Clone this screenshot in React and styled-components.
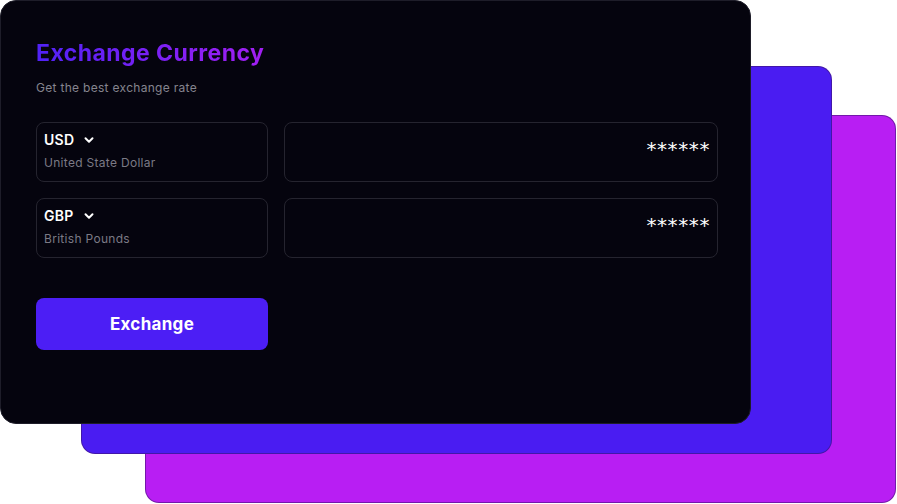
import React from 'react'
import styled, { createGlobalStyle } from 'styled-components';

const GlobalStyle = createGlobalStyle`
  html, body {
    margin: 0;
    padding: 0;
    background: #ffffff;
    font-family: Inter, "Noto Sans", sans-serif;
  }
`;

const currencies = [
  { code: 'USD', name: 'United State Dollar', amount: '******' },
  { code: 'GBP', name: 'British Pounds', amount: '******' },
];

const Chevron = () => (
  <svg width="14" height="14" viewBox="0 0 24 24" fill="none" stroke="currentColor" strokeWidth="3.4" strokeLinecap="round" strokeLinejoin="round">
    <polyline points="6 9 12 15 18 9" />
  </svg>
);

const App = () => {
  return (
    <>
      <GlobalStyle />
      <Stage>
        <BackCard $x={145} $y={115} $color="#b81ef3" />
        <BackCard $x={81} $y={66} $color="#4a1cf2" />
        <MainCard>
          <Title>Exchange Currency</Title>
          <Subtitle>Get the best exchange rate</Subtitle>
          <Rows>
            {currencies.map((c) => (
              <Row key={c.code}>
                <Select>
                  <Code>
                    {c.code}
                    <Chevron />
                  </Code>
                  <CurrencyName>{c.name}</CurrencyName>
                </Select>
                <Amount>{c.amount}</Amount>
              </Row>
            ))}
          </Rows>
          <Button>Exchange</Button>
        </MainCard>
      </Stage>
    </>
  )
}

export default App

const Stage = styled.div`
  display: grid;
  width: 897px;
  height: 504px;
`;

const BackCard = styled.div`
  grid-area: 1 / 1;
  margin: ${(p) => p.$y}px 0 0 ${(p) => p.$x}px;
  width: 751px;
  height: 388px;
  box-sizing: border-box;
  border-radius: 14px;
  background: ${(p) => p.$color};
  border: 1px solid rgba(60, 20, 110, 0.55);
`;

const MainCard = styled.div`
  grid-area: 1 / 1;
  width: 751px;
  height: 424px;
  box-sizing: border-box;
  border-radius: 16px;
  background: #05040e;
  border: 1px solid #1e1d29;
  padding: 38px 34px 0 35px;
  display: flex;
  flex-direction: column;
`;

const Title = styled.h1`
  margin: 0;
  font-size: 23px;
  line-height: 28px;
  font-weight: 700;
  letter-spacing: 0.45px;
  background: linear-gradient(90deg, #5022f6 0%, #a21ff2 100%);
  -webkit-background-clip: text;
  background-clip: text;
  color: transparent;
  align-self: flex-start;
`;

const Subtitle = styled.p`
  margin: 13px 0 0;
  font-size: 12px;
  line-height: 16px;
  letter-spacing: 0.3px;
  color: #85848f;
`;

const Rows = styled.div`
  margin-top: 26px;
  display: flex;
  flex-direction: column;
  gap: 16px;
`;

const Row = styled.div`
  display: grid;
  grid-template-columns: 232px 434px;
  gap: 16px;
`;

const Field = styled.div`
  box-sizing: border-box;
  height: 60px;
  border: 1px solid #25242f;
  border-radius: 8px;
`;

const Select = styled(Field)`
  padding: 8px 7px 0;
  display: flex;
  flex-direction: column;
  gap: 6px;
`;

const Code = styled.div`
  display: flex;
  align-items: center;
  gap: 8px;
  color: #ffffff;
  font-size: 14px;
  font-weight: 600;
  line-height: 18px;
  letter-spacing: 0.3px;
`;

const CurrencyName = styled.div`
  color: #7b7a85;
  font-size: 12px;
  line-height: 16px;
  letter-spacing: 0.3px;
`;

const Amount = styled(Field)`
  display: flex;
  justify-content: flex-end;
  padding: 14px 7px 0 0;
  color: #ffffff;
  font-size: 20px;
  line-height: 24px;
  letter-spacing: 0.6px;
  font-family: "DejaVu Sans", sans-serif;
`;

const Button = styled.button`
  margin-top: 40px;
  width: 232px;
  height: 52px;
  border: none;
  border-radius: 8px;
  background: #4c1ef5;
  color: #ffffff;
  font-family: Inter, sans-serif;
  font-size: 17px;
  font-weight: 700;
  letter-spacing: 0.3px;
  cursor: pointer;
`;
